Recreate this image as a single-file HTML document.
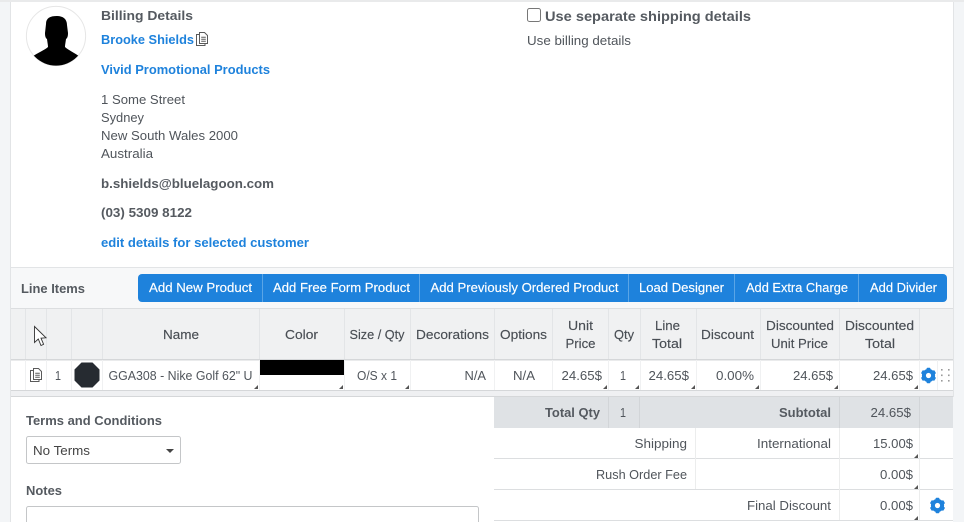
<!DOCTYPE html>
<html><head><meta charset="utf-8"><style>
html,body{margin:0;padding:0;background:#fff}
svg{display:block}
text{font-family:"Liberation Sans",sans-serif;font-size:13px;fill:#50555b}
.b{font-weight:700;fill:#555a60}
.l{fill:#1e82dc;font-weight:700}
.w{fill:#fff;stroke:#fff;stroke-width:.15px}
.h{fill:#494e54;stroke:#494e54;stroke-width:.15px}
</style></head><body>
<svg width="964" height="522" viewBox="0 0 964 522" xmlns="http://www.w3.org/2000/svg">
<defs>
<g id="gear"><circle r="4.7" fill="none" stroke="#1e82dc" stroke-width="3.8"/><g fill="#1e82dc"><rect x="-1.9" y="-7.7" width="3.8" height="15.4" rx=".8"/><rect x="-1.9" y="-7.7" width="3.8" height="15.4" rx=".8" transform="rotate(60)"/><rect x="-1.9" y="-7.7" width="3.8" height="15.4" rx=".8" transform="rotate(120)"/></g><circle r="2.6" fill="#fff"/></g>
<path id="tri" d="M0 4L4 4L4 0Z" fill="#555"/>
<g id="doc" fill="none" stroke="#5a5a5a" stroke-width="1"><path d="M3.5 .5H8.5L11.5 3.5V11.5H3.5Z"/><path d="M3.5 2.5H.5V13.5H9V11.5"/><path d="M5.2 5.2H9.8M5.2 7.2H9.8M5.2 9.2H9.8"/></g>
</defs>
<!-- page frame -->
<rect width="964" height="522" fill="#fff"/>
<rect x="0" y="0" width="11" height="522" fill="#f3f5f7"/>
<rect x="10" y="0" width="1" height="522" fill="#e2e4e6"/>
<rect x="953" y="0" width="11" height="522" fill="#f3f5f7"/>
<rect x="953" y="0" width="1" height="397" fill="#e2e4e6"/>
<rect x="0" y="0" width="964" height="2" fill="#e9eaeb"/>

<!-- avatar -->
<circle cx="56" cy="36" r="29.6" fill="#fff" stroke="#e6e6e6"/>
<clipPath id="av"><circle cx="56" cy="36" r="29.6"/></clipPath>
<path clip-path="url(#av)" fill="#000" d="M46 24C46 18 50 16 57 16C63 16 67 19 67 25L68 33C68 36 67.5 38 66 39C65.5 43 65 45 65 47C68 50 75 53 80 57L80 70H32V57C37 53 45 50 48 47C48 45 47.5 43 47 39C45.5 38 45 36 45 33Z"/>

<!-- billing -->
<text x="101" y="20" class="b" textLength="92" lengthAdjust="spacingAndGlyphs">Billing Details</text>
<text x="101" y="44" class="l" textLength="93" lengthAdjust="spacingAndGlyphs">Brooke Shields</text>
<use href="#doc" x="196" y="32"/>
<text x="101" y="74" class="l" textLength="169" lengthAdjust="spacingAndGlyphs">Vivid Promotional Products</text>
<text x="101" y="104" textLength="84" lengthAdjust="spacingAndGlyphs">1 Some Street</text>
<text x="101" y="122" textLength="43" lengthAdjust="spacingAndGlyphs">Sydney</text>
<text x="101" y="140" textLength="137" lengthAdjust="spacingAndGlyphs">New South Wales 2000</text>
<text x="101" y="158" textLength="52" lengthAdjust="spacingAndGlyphs">Australia</text>
<text x="101" y="188" class="b" textLength="173" lengthAdjust="spacingAndGlyphs">b.shields@bluelagoon.com</text>
<text x="101" y="217" class="b" textLength="91" lengthAdjust="spacingAndGlyphs">(03) 5309 8122</text>
<text x="101" y="247" class="l" textLength="208" lengthAdjust="spacingAndGlyphs">edit details for selected customer</text>

<!-- shipping -->
<rect x="527.5" y="8.5" width="13" height="13" rx="2" fill="#fff" stroke="#777"/>
<text x="545" y="21" class="b" style="font-size:14px" textLength="206" lengthAdjust="spacingAndGlyphs">Use separate shipping details</text>
<text x="527" y="45" textLength="104" lengthAdjust="spacingAndGlyphs">Use billing details</text>

<!-- toolbar -->
<rect x="11" y="267" width="942" height="41" fill="#f7f8f9"/>
<rect x="11" y="267" width="942" height="1" fill="#e2e4e6"/>
<text x="21" y="293" class="b" textLength="64" lengthAdjust="spacingAndGlyphs">Line Items</text>
<rect x="138" y="274" width="809" height="28" rx="4" fill="#1e82dc"/>
<g fill="#5aa5e6"><rect x="262" y="274" width="1" height="28"/><rect x="419" y="274" width="1" height="28"/><rect x="628" y="274" width="1" height="28"/><rect x="734" y="274" width="1" height="28"/><rect x="858" y="274" width="1" height="28"/></g>
<text x="149" y="292" class="w" textLength="103" lengthAdjust="spacingAndGlyphs">Add New Product</text>
<text x="273" y="292" class="w" textLength="137" lengthAdjust="spacingAndGlyphs">Add Free Form Product</text>
<text x="430.5" y="292" class="w" textLength="188" lengthAdjust="spacingAndGlyphs">Add Previously Ordered Product</text>
<text x="639" y="292" class="w" textLength="85" lengthAdjust="spacingAndGlyphs">Load Designer</text>
<text x="746" y="292" class="w" textLength="102" lengthAdjust="spacingAndGlyphs">Add Extra Charge</text>
<text x="870" y="292" class="w" textLength="67" lengthAdjust="spacingAndGlyphs">Add Divider</text>

<!-- table header -->
<rect x="11" y="308" width="942" height="51" fill="#f0f1f2"/>
<rect x="11" y="308" width="942" height="1" fill="#dcdee0"/>
<rect x="11" y="359" width="942" height="1.5" fill="#d5d7d9"/>
<rect x="11" y="390" width="942" height="1" fill="#d5d7d9"/>
<rect x="11" y="391" width="942" height="5" fill="#eff0f2"/>
<rect x="11" y="396" width="942" height="1" fill="#d5d7d9"/>
<g fill="#e3e5e7">
<rect x="25" y="309" width="1" height="50"/><rect x="46" y="309" width="1" height="50"/><rect x="71" y="309" width="1" height="50"/><rect x="102" y="309" width="1" height="50"/><rect x="259" y="309" width="1" height="50"/><rect x="344" y="309" width="1" height="50"/><rect x="410" y="309" width="1" height="50"/><rect x="494" y="309" width="1" height="50"/><rect x="552" y="309" width="1" height="50"/><rect x="608" y="309" width="1" height="50"/><rect x="640" y="309" width="1" height="50"/><rect x="696" y="309" width="1" height="50"/><rect x="760" y="309" width="1" height="50"/><rect x="839" y="309" width="1" height="50"/><rect x="919" y="309" width="1" height="50"/>
</g>
<g fill="#f0f1f2">
<rect x="25" y="360" width="1" height="30"/><rect x="46" y="360" width="1" height="30"/><rect x="71" y="360" width="1" height="30"/><rect x="102" y="360" width="1" height="30"/><rect x="259" y="360" width="1" height="30"/><rect x="344" y="360" width="1" height="30"/><rect x="410" y="360" width="1" height="30"/><rect x="494" y="360" width="1" height="30"/><rect x="552" y="360" width="1" height="30"/><rect x="608" y="360" width="1" height="30"/><rect x="640" y="360" width="1" height="30"/><rect x="696" y="360" width="1" height="30"/><rect x="760" y="360" width="1" height="30"/><rect x="839" y="360" width="1" height="30"/><rect x="919" y="360" width="1" height="30"/><rect x="937" y="360" width="1" height="30"/>
</g>
<text x="163" y="339" class="h" textLength="36" lengthAdjust="spacingAndGlyphs">Name</text>
<text x="285" y="339" class="h" textLength="33" lengthAdjust="spacingAndGlyphs">Color</text>
<text x="349.5" y="339" class="h" textLength="55" lengthAdjust="spacingAndGlyphs">Size / Qty</text>
<text x="416" y="339" class="h" textLength="73" lengthAdjust="spacingAndGlyphs">Decorations</text>
<text x="500" y="339" class="h" textLength="47" lengthAdjust="spacingAndGlyphs">Options</text>
<text x="568" y="330" class="h" textLength="25" lengthAdjust="spacingAndGlyphs">Unit</text>
<text x="565.5" y="348" class="h" textLength="30" lengthAdjust="spacingAndGlyphs">Price</text>
<text x="614" y="339" class="h" textLength="20" lengthAdjust="spacingAndGlyphs">Qty</text>
<text x="655" y="330" class="h" textLength="25" lengthAdjust="spacingAndGlyphs">Line</text>
<text x="652" y="348" class="h" textLength="30" lengthAdjust="spacingAndGlyphs">Total</text>
<text x="701" y="339" class="h" textLength="53" lengthAdjust="spacingAndGlyphs">Discount</text>
<text x="766" y="330" class="h" textLength="68" lengthAdjust="spacingAndGlyphs">Discounted</text>
<text x="771" y="348" class="h" textLength="57" lengthAdjust="spacingAndGlyphs">Unit Price</text>
<text x="845" y="330" class="h" textLength="69" lengthAdjust="spacingAndGlyphs">Discounted</text>
<text x="865" y="348" class="h" textLength="30" lengthAdjust="spacingAndGlyphs">Total</text>

<!-- cursor -->
<path d="M34.5 326.5V342.5L38.3 339L41 345.5L43.6 344.3L41 338.2L46 337.8Z" fill="#fff" stroke="#333" stroke-width=".9"/>

<!-- row -->
<use href="#doc" x="30" y="368"/>
<text x="55" y="380" textLength="6" lengthAdjust="spacingAndGlyphs">1</text>
<path d="M81.5 362.5H92.5L99.5 369.5V380.5L92.5 387.5H81.5L74.5 380.5V369.5Z" fill="#262b31"/>
<text x="108.5" y="380" textLength="144" lengthAdjust="spacingAndGlyphs">GGA308 - Nike Golf 62" U</text>
<rect x="260" y="360" width="84" height="15" fill="#000"/>
<text x="357" y="380" textLength="40" lengthAdjust="spacingAndGlyphs">O/S x 1</text>
<text x="464.5" y="380" textLength="21.5" lengthAdjust="spacingAndGlyphs">N/A</text>
<text x="513" y="380" textLength="22" lengthAdjust="spacingAndGlyphs">N/A</text>
<text x="561.5" y="380" textLength="40.5" lengthAdjust="spacingAndGlyphs">24.65$</text>
<text x="620" y="380" textLength="6" lengthAdjust="spacingAndGlyphs">1</text>
<text x="648.5" y="380" textLength="40.5" lengthAdjust="spacingAndGlyphs">24.65$</text>
<text x="716" y="380" textLength="38" lengthAdjust="spacingAndGlyphs">0.00%</text>
<text x="793" y="380" textLength="40" lengthAdjust="spacingAndGlyphs">24.65$</text>
<text x="873" y="380" textLength="40" lengthAdjust="spacingAndGlyphs">24.65$</text>
<use href="#gear" x="928.5" y="375.5"/>
<g fill="#9a9a9a"><rect x="941" y="369" width="1.6" height="1.6"/><rect x="948" y="369" width="1.6" height="1.6"/><rect x="941" y="374.5" width="1.6" height="1.6"/><rect x="948" y="374.5" width="1.6" height="1.6"/><rect x="941" y="380" width="1.6" height="1.6"/><rect x="948" y="380" width="1.6" height="1.6"/></g>
<use href="#tri" x="254" y="385"/><use href="#tri" x="339" y="385"/><use href="#tri" x="405" y="385"/><use href="#tri" x="603" y="385"/><use href="#tri" x="635" y="385"/><use href="#tri" x="691" y="385"/><use href="#tri" x="755" y="385"/><use href="#tri" x="834" y="385"/><use href="#tri" x="914" y="385"/>

<!-- terms -->
<text x="26" y="425" class="b" textLength="136" lengthAdjust="spacingAndGlyphs">Terms and Conditions</text>
<rect x="26.5" y="436.5" width="154" height="27" rx="2" fill="#fff" stroke="#c4c6c8"/>
<text x="33" y="455" style="fill:#444" textLength="57" lengthAdjust="spacingAndGlyphs">No Terms</text>
<path d="M166 449H174L170 453Z" fill="#444"/>
<text x="26" y="495" class="b" textLength="36" lengthAdjust="spacingAndGlyphs">Notes</text>
<rect x="26.5" y="506.5" width="452" height="30" rx="2" fill="#fff" stroke="#c4c6c8"/>

<!-- totals -->
<rect x="494" y="397" width="459" height="31" fill="#dfe2e5"/>
<g fill="#d2d5d8"><rect x="608" y="397" width="1" height="31"/><rect x="639" y="397" width="1" height="31"/><rect x="839" y="397" width="1" height="31"/><rect x="919" y="397" width="1" height="31"/></g>
<g fill="#dcdee0"><rect x="494" y="458" width="459" height="1"/><rect x="494" y="489" width="459" height="1"/><rect x="494" y="520" width="459" height="1"/></g>
<g fill="#eceded"><rect x="695" y="428" width="1" height="61"/><rect x="839" y="428" width="1" height="92"/><rect x="919" y="428" width="1" height="92"/></g>
<text x="545" y="417" class="b" textLength="55" lengthAdjust="spacingAndGlyphs">Total Qty</text>
<text x="620" y="417" textLength="6" lengthAdjust="spacingAndGlyphs">1</text>
<text x="779" y="417" class="b" textLength="52" lengthAdjust="spacingAndGlyphs">Subtotal</text>
<text x="870.5" y="417" textLength="40.5" lengthAdjust="spacingAndGlyphs">24.65$</text>
<text x="634.5" y="448" textLength="52.5" lengthAdjust="spacingAndGlyphs">Shipping</text>
<text x="757" y="448" textLength="74" lengthAdjust="spacingAndGlyphs">International</text>
<text x="873" y="448" textLength="40" lengthAdjust="spacingAndGlyphs">15.00$</text>
<text x="596" y="479" textLength="91" lengthAdjust="spacingAndGlyphs">Rush Order Fee</text>
<text x="880" y="479" textLength="33" lengthAdjust="spacingAndGlyphs">0.00$</text>
<text x="747" y="510" textLength="84" lengthAdjust="spacingAndGlyphs">Final Discount</text>
<text x="880" y="510" textLength="33" lengthAdjust="spacingAndGlyphs">0.00$</text>
<use href="#tri" x="914" y="454"/><use href="#tri" x="914" y="485"/><use href="#tri" x="914" y="516"/>
<use href="#gear" x="937.5" y="505.5"/>
</svg>
</body></html>
